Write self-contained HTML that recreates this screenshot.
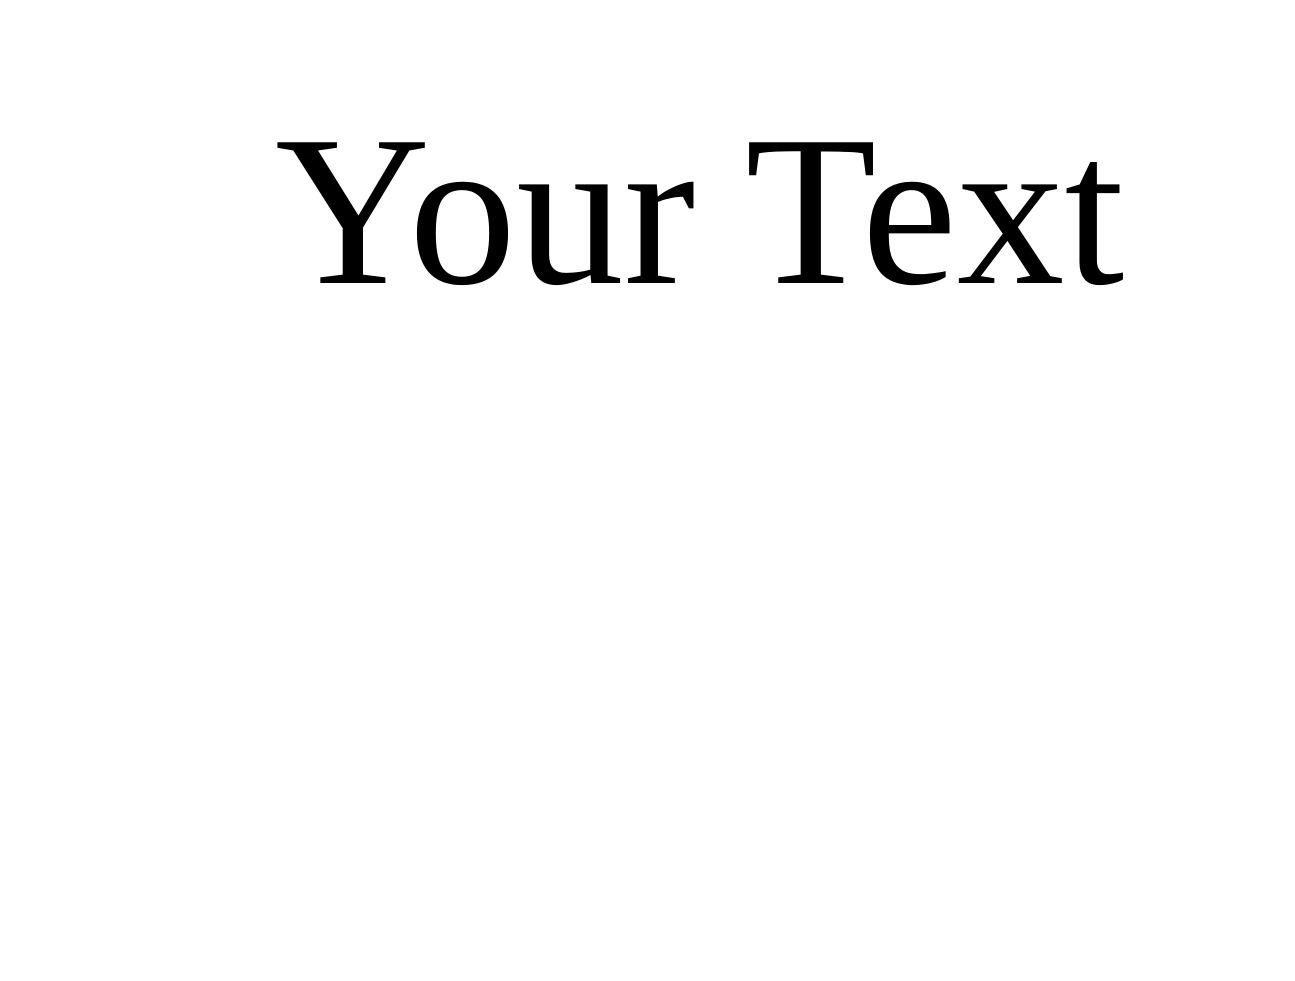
<!DOCTYPE html>
<html><head><style>
html,body{margin:0;padding:0;background:#fff;width:1295px;height:981px;overflow:hidden}
.t{position:absolute;left:275px;top:103px;font-family:"Liberation Serif",serif;font-size:215px;line-height:1;color:#000;white-space:nowrap}
</style></head><body>
<div class="t">Your Text</div>
</body></html>
